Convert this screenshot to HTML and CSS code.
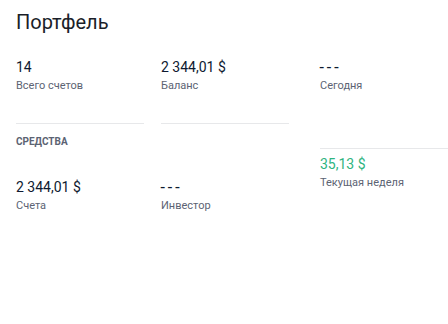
FILE: index.html
```html
<!DOCTYPE html>
<html lang="ru">
<head>
  <meta charset="UTF-8">
  <meta name="viewport" content="width=device-width, initial-scale=1.0">
  <title>Портфель</title>
  <link rel="stylesheet" href="styles.css">
</head>
<body>

  <h2 class="title">Портфель</h2>

  <div class="summary">
    <div class="main">
      <div class="stat">
        <div class="value">14</div>
        <div class="label">Всего счетов</div>
      </div>
      <div class="stat">
        <div class="value">2 344,01 $</div>
        <div class="label">Баланс</div>
      </div>

      <div class="divider"></div>
      <div class="divider"></div>

      <div class="section">Средства</div>

      <div class="stat">
        <div class="value">2 344,01 $</div>
        <div class="label">Счета</div>
      </div>
      <div class="stat">
        <div class="value"><span class="empty">---</span></div>
        <div class="label">Инвестор</div>
      </div>
    </div>

    <div class="side">
      <div class="stat">
        <div class="value"><span class="empty">---</span></div>
        <div class="label">Сегодня</div>
      </div>
      <div class="side-divider"></div>
      <div class="stat">
        <div class="value positive">35,13 $</div>
        <div class="label">Текущая неделя</div>
      </div>
    </div>
  </div>

</body>
</html>
```

FILE: styles.css
```css
body {
  font-family: Roboto, "Noto Sans", Arial, sans-serif;
  background-color: #ffffff;
  margin: 0;
  padding: 0;
  color: #111b2e;
}
.title {
  font-size: 20px;
  font-weight: 400;
  line-height: 24px;
  margin: 0;
  padding: 10px 16px 0;
  color: #1a1e29;
}
.summary {
  display: flex;
  gap: 31px;
  padding: 24px 0 0 16px;
}
.main {
  display: grid;
  grid-template-columns: 128px 128px;
  column-gap: 17px;
  align-content: start;
}
.side {
  width: 128px;
  flex-shrink: 0;
}
.value {
  font-size: 14px;
  line-height: 18px;
  height: 18px;
  color: #0e1a30;
}
.value .empty {
  font-family: "Liberation Sans", Arial, sans-serif;
  font-size: 16px;
  line-height: 0;
  letter-spacing: 2px;
  margin-left: -1px;
}
.value.positive {
  color: #2fb47f;
}
.label {
  font-size: 11px;
  line-height: 16px;
  margin-top: 2px;
  color: #5c6373;
}
.divider {
  margin-top: 29px;
  border-top: 1px solid #e7e8ea;
}
.section {
  grid-column: 1 / 3;
  margin-top: 12px;
  margin-bottom: 30px;
  font-size: 10px;
  line-height: 12px;
  font-weight: 700;
  text-transform: uppercase;
  color: #5c6373;
}
.side-divider {
  margin-top: 54px;
  margin-bottom: 6px;
  border-top: 1px solid #e7e8ea;
}
```
